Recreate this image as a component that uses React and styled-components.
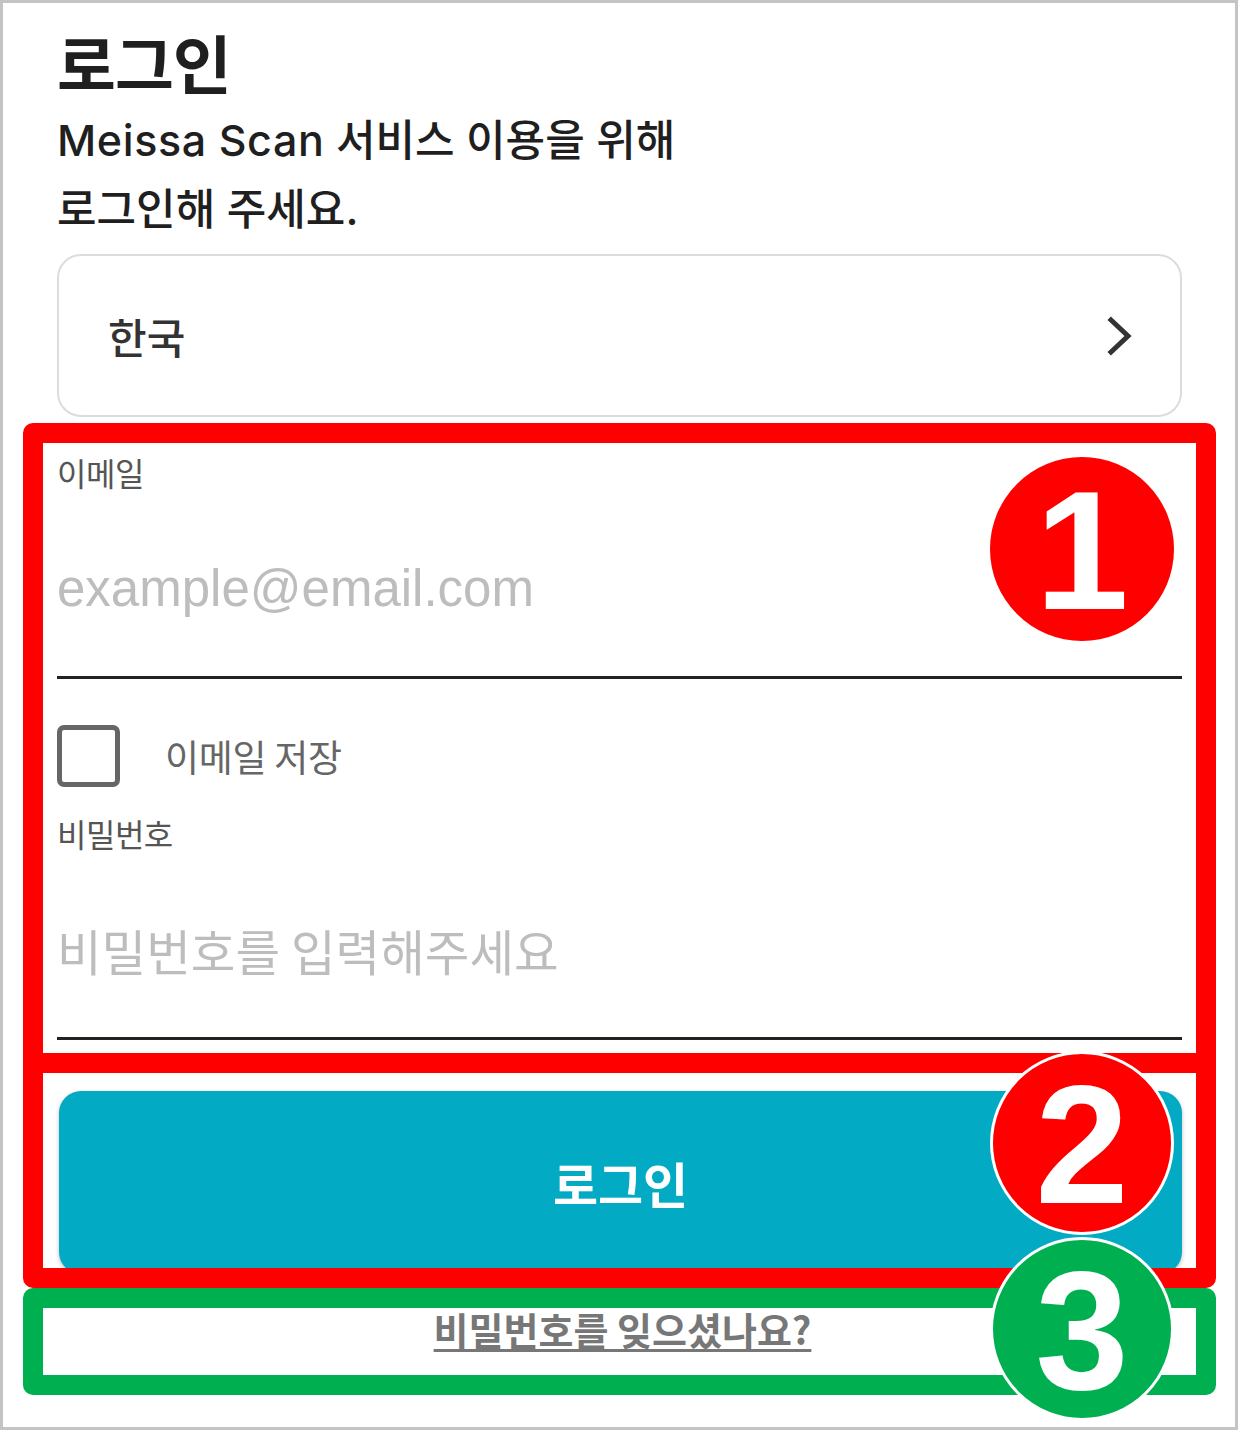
import React from "react";
import styled, { createGlobalStyle } from "styled-components";

const Global = createGlobalStyle`
  html, body { margin: 0; padding: 0; background: #fff; }
  * { box-sizing: border-box; }
  body { font-family: "Noto Sans CJK KR", "Noto Sans", sans-serif; }
`;

const KR = `"Noto Sans CJK KR", "Noto Sans", sans-serif`;
const LATIN_KR = `"Liberation Sans", "Noto Sans CJK KR", sans-serif`;
const INTER_KR = `Inter, "Noto Sans CJK KR", sans-serif`;

const Frame = styled.div`
  position: relative;
  width: 1238px;
  height: 1430px;
  border: 3px solid #c4c4c4;
  padding: 23px 53px 0 54px;
  display: flex;
  flex-direction: column;
  overflow: hidden;
`;

const Title = styled.h1`
  margin: 0;
  font-family: ${KR};
  font-size: 64px;
  font-weight: 700;
  line-height: 70px;
  color: #1f1f1f;
  letter-spacing: -1px;
`;

const Subtitle = styled.p`
  margin: 10px 0 0;
  font-family: ${INTER_KR};
  font-size: 43px;
  font-weight: 500;
  line-height: 69px;
  color: #1f1f1f;
`;

const Brand = styled.span`
  letter-spacing: 0.6px;
`;

const Select = styled.button`
  margin-top: 10px;
  height: 163px;
  width: 100%;
  display: flex;
  align-items: center;
  justify-content: space-between;
  padding: 0 47px 0 49px;
  background: #fff;
  border: 2px solid #dcdcdc;
  border-radius: 24px;
  font-family: ${KR};
  font-size: 42px;
  font-weight: 500;
  color: #333;
  cursor: pointer;
`;

const Label = styled.div`
  margin-top: ${(p) => p.$top}px;
  font-family: ${KR};
  font-size: 32px;
  line-height: 40px;
  color: #555;
  letter-spacing: -0.5px;
`;

const InputWrap = styled.label`
  height: 187px;
  display: flex;
  align-items: center;
  padding-top: 10px;
  border-bottom: 3px solid #222;
`;

const TextInput = styled.input`
  width: 100%;
  border: 0;
  outline: none;
  padding: 0;
  background: transparent;
  font-family: ${(p) => (p.$latin ? LATIN_KR : KR)};
  font-size: ${(p) => (p.$latin ? 51 : 48.5)}px;
  line-height: 62px;
  color: #333;
  &::placeholder {
    color: #bdbdbd;
  }
`;

const CheckRow = styled.label`
  margin-top: 46px;
  height: 62px;
  display: flex;
  align-items: center;
  gap: 45px;
  font-family: ${KR};
  font-size: 37px;
  color: #666;
  letter-spacing: -0.3px;
`;

const CheckBox = styled.span`
  width: 63px;
  height: 62px;
  border: 5px solid #666;
  border-radius: 7px;
  flex: none;
`;

const LoginButton = styled.button`
  margin-top: 51px;
  margin-left: 2px;
  height: 183px;
  width: calc(100% - 2px);
  border: 0;
  border-radius: 22px;
  background: #02aac4;
  box-shadow: 0 2px 4px rgba(0, 0, 0, 0.25);
  font-family: ${KR};
  font-size: 49px;
  font-weight: 700;
  color: #fff;
  cursor: pointer;
`;

const Forgot = styled.a`
  margin-top: 30px;
  align-self: center;
  font-family: ${KR};
  font-size: 38px;
  font-weight: 700;
  line-height: 50px;
  color: #777;
  text-decoration: underline;
  text-decoration-thickness: 3px;
  text-underline-offset: 4px;
  letter-spacing: 0;
  margin-left: 6px;
`;

/* annotation overlay */
const Overlay = styled.div`
  position: absolute;
  inset: -3px;
  pointer-events: none;
`;

const Box = styled.div`
  position: absolute;
  left: 23px;
  width: 1193px;
  top: ${(p) => p.$top}px;
  height: ${(p) => p.$h}px;
  border: 20px solid ${(p) => p.$color};
  border-radius: 10px;
`;

const Badge = styled.div`
  position: absolute;
  left: 990px;
  top: ${(p) => p.$cy - 92}px;
  width: 184px;
  height: 184px;
  border-radius: 50%;
  background: ${(p) => p.$color};
  border: ${(p) => (p.$ring ? "3px solid #fff" : "0")};
  display: flex;
  align-items: center;
  justify-content: center;
  font-family: "Liberation Sans", Arial, sans-serif;
  font-size: 168px;
  font-weight: 700;
  line-height: 1;
  color: #fff;
  padding-top: 4px;
`;

const Chevron = () => (
  <svg width="26" height="40" viewBox="0 0 26 40" fill="none">
    <path d="M4 4 L21 20 L4 36" stroke="#333" strokeWidth="5" strokeLinejoin="miter" strokeLinecap="square" />
  </svg>
);

export default function App() {
  return (
    <>
      <Global />
      <Frame>
        <Title>로그인</Title>
        <Subtitle>
          <Brand>Meissa Scan</Brand> 서비스 이용을 위해
          <br />
          로그인해 주세요.
        </Subtitle>
        <Select type="button">
          <span>한국</span>
          <Chevron />
        </Select>

        <Label $top={35}>이메일</Label>
        <InputWrap>
          <TextInput $latin type="email" placeholder="example@email.com" />
        </InputWrap>

        <CheckRow>
          <CheckBox />
          이메일 저장
        </CheckRow>

        <Label $top={26}>비밀번호</Label>
        <InputWrap>
          <TextInput type="password" placeholder="비밀번호를 입력해주세요" />
        </InputWrap>

        <LoginButton type="button">로그인</LoginButton>
        <Forgot href="#">비밀번호를 잊으셨나요?</Forgot>

        <Overlay>
          <Box $top={423} $h={650} $color="#ff0000" />
          <Box $top={1053} $h={235} $color="#ff0000" />
          <Box $top={1288} $h={107} $color="#00b050" />
          <Badge $cy={549} $color="#ff0000">1</Badge>
          <Badge $cy={1143} $color="#ff0000" $ring>2</Badge>
          <Badge $cy={1329} $color="#00b050" $ring>3</Badge>
        </Overlay>
      </Frame>
    </>
  );
}
